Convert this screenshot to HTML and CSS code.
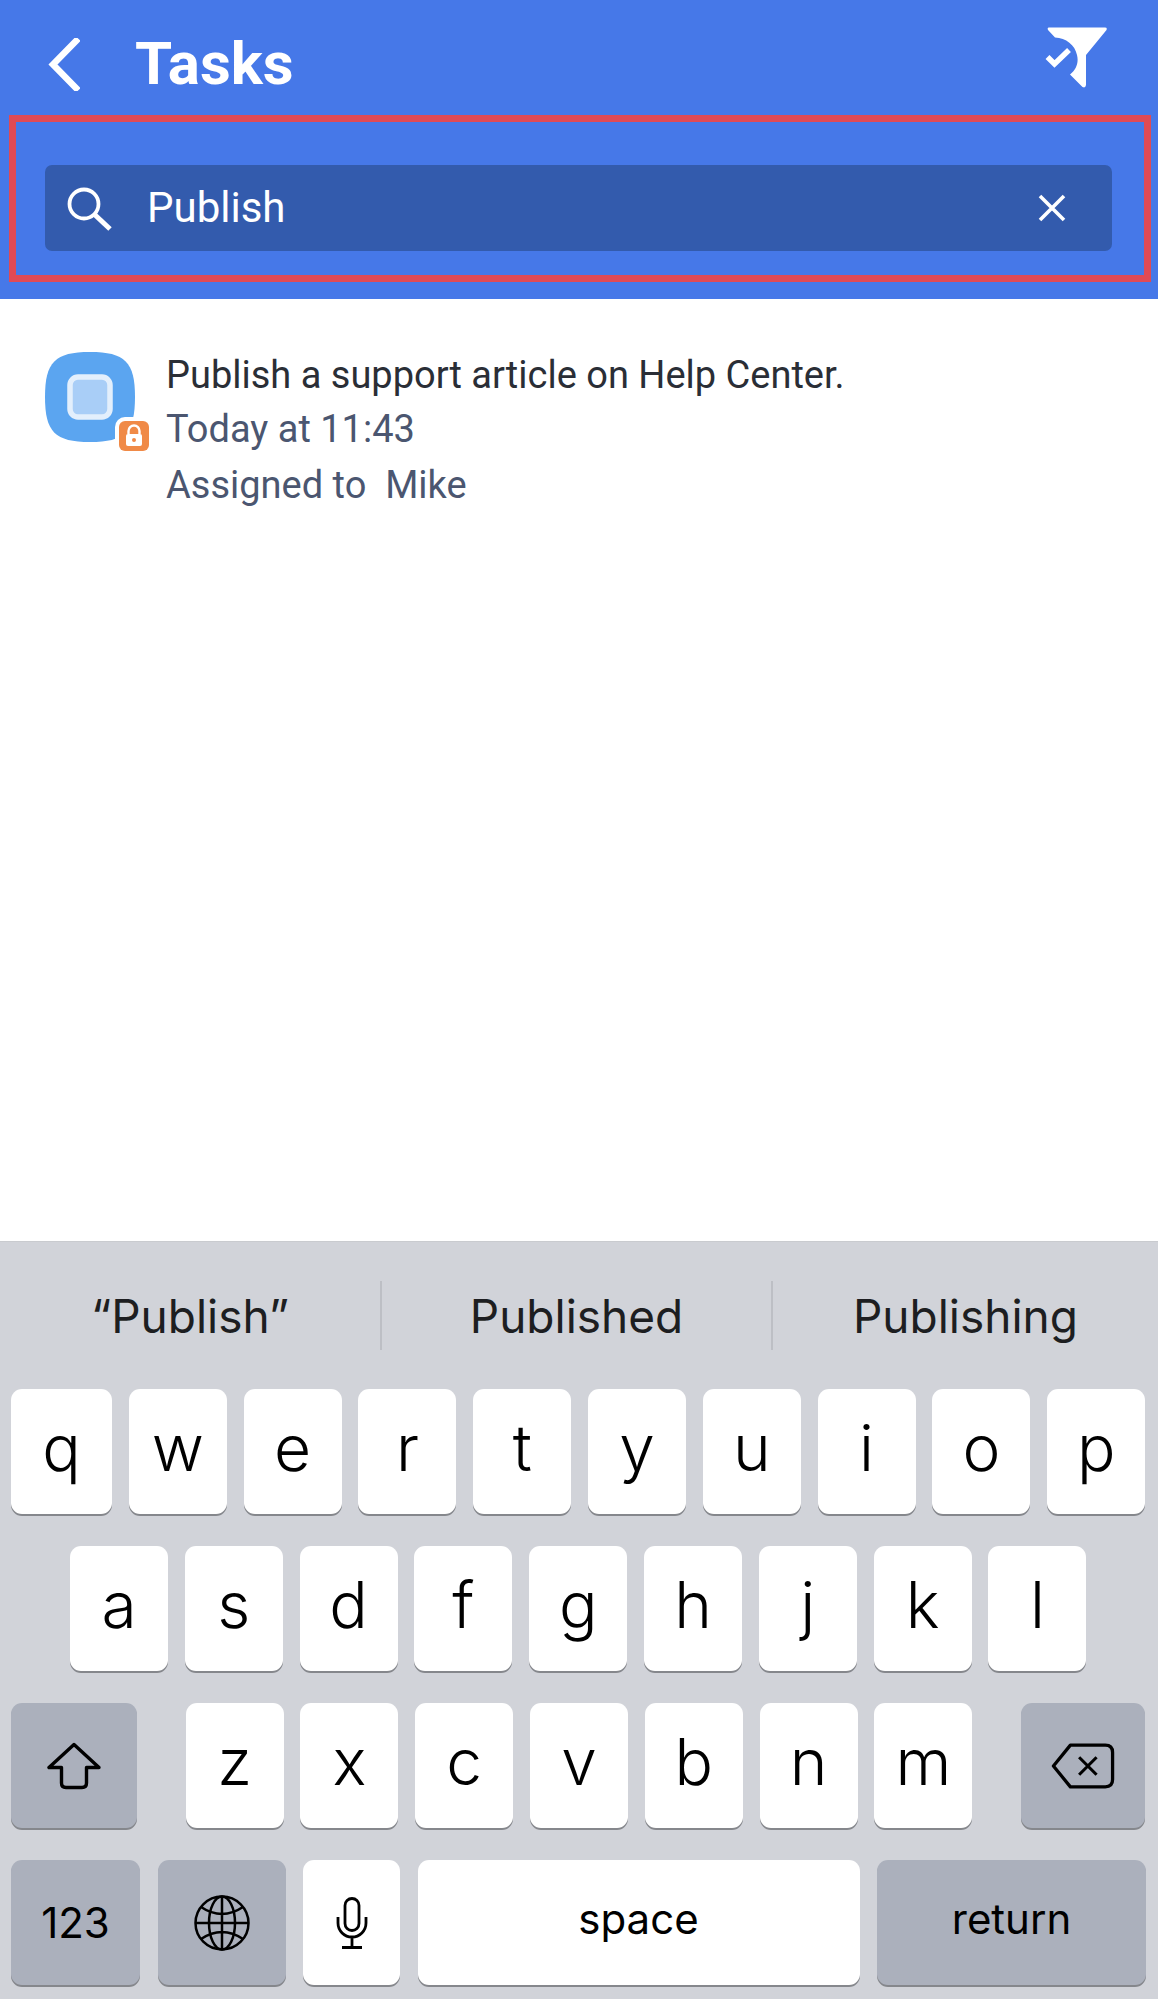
FILE: index.html
```html
<!DOCTYPE html>
<html lang="en">
<head>
<meta charset="utf-8">
<title>Tasks</title>
<link rel="stylesheet" href="styles.css">
</head>
<body>
<div class="app">
  <header class="header">
    <div class="topbar">
      <svg class="back" viewBox="0 0 32 53" aria-hidden="true"><path d="M28 3 5 26.500 28 50" fill="none" stroke="#fff" stroke-width="6.500" stroke-linecap="square"/></svg>
      <h1 class="title">Tasks</h1>
      <svg class="filter" viewBox="0 0 62 61" aria-hidden="true">
        <path d="M4 0.500H60Q62.500 0.500 61.500 3L41 28V58Q40.500 61.500 37.500 60L25 47.500C31 43 34 36 32 28C30 18 21 11 10 10.500L3 3Q2 0.500 4 0.500Z" fill="#fff"/>
        <path d="M2.500 30 9.500 37 24 23" fill="none" stroke="#fff" stroke-width="5.500"/>
      </svg>
    </div>
    <div class="search-frame">
      <div class="search">
        <svg class="search-icon" viewBox="0 0 46 45" aria-hidden="true"><circle cx="18" cy="18" r="14.500" fill="none" stroke="#fff" stroke-width="3.800"/><path d="M28 28 44 43" stroke="#fff" stroke-width="5" fill="none"/></svg>
        <span class="search-text">Publish</span>
        <svg class="clear" viewBox="0 0 28 28" aria-hidden="true"><path d="M2 2 26 26M26 2 2 26" stroke="#fff" stroke-width="3.600" fill="none"/></svg>
      </div>
    </div>
  </header>

  <main class="content">
    <article class="task">
      <div class="task-icon">
        <svg class="tile" viewBox="0 0 90 90" aria-hidden="true">
          <path d="M45 0C80 0 90 10 90 45C90 80 80 90 45 90C10 90 0 80 0 45C0 10 10 0 45 0Z" fill="#5BA5F0"/>
          <rect x="25" y="25" width="40" height="40" rx="8" fill="#A9CEF7" stroke="#E3EFFC" stroke-width="5.500"/>
        </svg>
        <svg class="badge" viewBox="0 0 38 38" aria-hidden="true">
          <rect width="38" height="38" rx="10" fill="#fff"/>
          <rect x="4" y="4" width="30" height="30" rx="6" fill="#F08A47"/>
          <path d="M13.500 17V14A5.500 5.500 0 0 1 24.500 14V17" fill="none" stroke="#fff" stroke-width="2.400"/>
          <rect x="11" y="17" width="16" height="12" rx="2" fill="#fff"/>
          <circle cx="19" cy="23" r="2" fill="#F08A47"/>
        </svg>
      </div>
      <div class="task-body">
        <p class="task-title">Publish a support article on Help Center.</p>
        <p class="task-meta">Today at 11:43</p>
        <p class="task-meta task-meta-last">Assigned to&nbsp; Mike</p>
      </div>
    </article>
  </main>

  <section class="keyboard">
    <div class="suggestions">
      <span class="suggestion">“Publish”</span>
      <span class="suggestion">Published</span>
      <span class="suggestion">Publishing</span>
    </div>
    <div class="row row-1">
      <span class="key key-first">q</span><span class="key">w</span><span class="key">e</span><span class="key">r</span><span class="key">t</span><span class="key">y</span><span class="key">u</span><span class="key">i</span><span class="key">o</span><span class="key">p</span>
    </div>
    <div class="row row-2">
      <span class="key">a</span><span class="key">s</span><span class="key">d</span><span class="key">f</span><span class="key">g</span><span class="key">h</span><span class="key">j</span><span class="key">k</span><span class="key">l</span>
    </div>
    <div class="row row-3">
      <span class="key fn key-shift">
        <svg class="ic-shift" viewBox="0 0 56 48" aria-hidden="true"><path d="M28 2.500 3 25.500H15.500V41Q15.500 45.500 20 45.500H36Q40.500 45.500 40.500 41V25.500H53Z" fill="none" stroke="#000" stroke-width="3.400" stroke-linejoin="round"/></svg>
      </span>
      <div class="letters">
        <span class="key">z</span><span class="key">x</span><span class="key">c</span><span class="key">v</span><span class="key">b</span><span class="key">n</span><span class="key">m</span>
      </div>
      <span class="key fn key-del">
        <svg class="ic-del" viewBox="0 0 66 48" aria-hidden="true"><path d="M20 2.500H56Q63.500 2.500 63.500 10V38Q63.500 45.500 56 45.500H20L2.500 24Z" fill="none" stroke="#000" stroke-width="3.400" stroke-linejoin="round"/><path d="M29 15 47 33M47 15 29 33" stroke="#000" stroke-width="3.200" fill="none"/></svg>
      </span>
    </div>
    <div class="row row-4">
      <span class="key fn key-123 small">123</span>
      <span class="key fn key-globe">
        <svg class="ic-globe" viewBox="0 0 56 56" aria-hidden="true"><g fill="none" stroke="#000" stroke-width="2.500"><circle cx="28" cy="28" r="26.500"/><ellipse cx="28" cy="28" rx="13" ry="26.500"/><path d="M28 1.500V54.500M1.500 28H54.500M7 12Q28 26 49 12M7 44Q28 30 49 44"/></g></svg>
      </span>
      <span class="key key-mic">
        <svg class="ic-mic" viewBox="0 0 32 52" aria-hidden="true"><g fill="none" stroke="#000" stroke-width="2.800"><rect x="9" y="1.500" width="14" height="32" rx="7"/><path d="M2 20V26A14 14 0 0 0 30 26V20M16 40V50M6 50.500H26"/></g></svg>
      </span>
      <span class="key key-space small">space</span>
      <span class="key fn key-return small">return</span>
    </div>
  </section>
</div>
</body>
</html>
```

FILE: styles.css
```css
* {
  box-sizing: border-box;
}

html,
body {
  margin: 0;
  padding: 0;
  background: #fff;
}

.app {
  width: 1158px;
  height: 1999px;
  display: flex;
  flex-direction: column;
  overflow: hidden;
  font-family: Roboto, "Liberation Sans", sans-serif;
}

.header {
  height: 299px;
  flex: none;
  background: #4678E8;
}

.topbar {
  height: 115px;
  display: flex;
  align-items: center;
  padding: 13px 51px 0 48px;
}

.back {
  width: 32px;
  height: 53px;
  flex: none;
}

.title {
  margin: 0 0 0 55px;
  flex: 1;
  color: #fff;
  font-size: 60px;
  font-weight: 700;
  line-height: 70px;
}

.filter {
  width: 62px;
  height: 61px;
  margin-top: -13px;
  flex: none;
}

.search-frame {
  height: 167px;
  margin: 0 7px 0 9px;
  padding: 43px 32px 0 29px;
  border: 7px solid #E04A55;
}

.search {
  height: 86px;
  display: flex;
  align-items: center;
  padding: 0 46px 0 21px;
  background: #335BAD;
  border-radius: 7px;
}

.search-icon {
  width: 46px;
  height: 45px;
  flex: none;
}

.search-text {
  flex: 1;
  margin-left: 35px;
  color: #fff;
  font-size: 42px;
  line-height: 50px;
}

.clear {
  width: 28px;
  height: 28px;
  flex: none;
}

.content {
  flex: 1;
  padding: 53px 45px 0;
}

.task {
  display: flex;
}

.task-icon {
  position: relative;
  width: 90px;
  height: 90px;
  flex: none;
}

.tile {
  display: block;
  width: 90px;
  height: 90px;
}

.badge {
  position: absolute;
  left: 70px;
  top: 65px;
  width: 38px;
  height: 38px;
}

.task-body {
  margin-left: 31px;
  margin-top: -4px;
}

.task-title,
.task-meta {
  margin: 0;
  font-size: 38px;
  line-height: 54px;
}

.task-title {
  color: #2A2E36;
}

.task-meta {
  color: #4B5670;
}

.task-meta-last {
  margin-top: 2px;
}

.keyboard {
  flex: none;
  height: 758px;
  background: #D1D3D9;
  border-top: 1px solid #C9CBCF;
  font-family: Inter, "Liberation Sans", sans-serif;
  color: #000;
}

.suggestions {
  height: 147px;
  display: flex;
  padding-top: 39px;
}

.suggestion {
  height: 69px;
  display: flex;
  align-items: center;
  justify-content: center;
  font-size: 46px;
  color: #1D1E21;
}

.suggestion:nth-child(1) {
  width: 382px;
  border-right: 2px solid #BDBFC5;
}

.suggestion:nth-child(2) {
  width: 391px;
  border-right: 2px solid #BDBFC5;
}

.suggestion:nth-child(3) {
  flex: 1;
}

.row {
  height: 126px;
  display: flex;
  gap: 16.800px;
  margin-bottom: 31px;
}

.row-1 {
  padding-left: 11px;
}

.row-2 {
  padding-left: 70px;
}

.row-3 {
  padding: 0 13px 0 11px;
  justify-content: space-between;
  gap: 0;
}

.row-4 {
  padding-left: 11px;
  margin-bottom: 0;
  gap: 17.500px;
}

.letters {
  display: flex;
  gap: 16.800px;
}

.key {
  width: 98px;
  height: 125px;
  flex: none;
  display: flex;
  align-items: center;
  justify-content: center;
  padding-bottom: 8px;
  background: #fff;
  border-radius: 11px;
  box-shadow: 0 2px 0 #85878C;
  font-size: 64px;
  font-weight: 300;
  line-height: 1;
}

.key-first {
  width: 101px;
}

.fn {
  background: #ABB0BC;
}

.small {
  font-size: 42px;
  font-weight: 400;
}

.key-shift {
  width: 126px;
  padding-bottom: 0;
}

.key-del {
  width: 124px;
  padding-bottom: 0;
}

.key-123 {
  width: 129px;
  padding-bottom: 0;
}

.key-globe {
  width: 128px;
  padding-bottom: 0;
}

.key-mic {
  width: 97px;
  padding-bottom: 0;
}

.key-space {
  width: 442px;
}

.key-return {
  width: 269px;
}

.ic-shift {
  width: 56px;
  height: 48px;
}

.ic-del {
  width: 64px;
  height: 48px;
}

.ic-globe {
  width: 56px;
  height: 56px;
}

.ic-mic {
  width: 32px;
  height: 52px;
}
```
